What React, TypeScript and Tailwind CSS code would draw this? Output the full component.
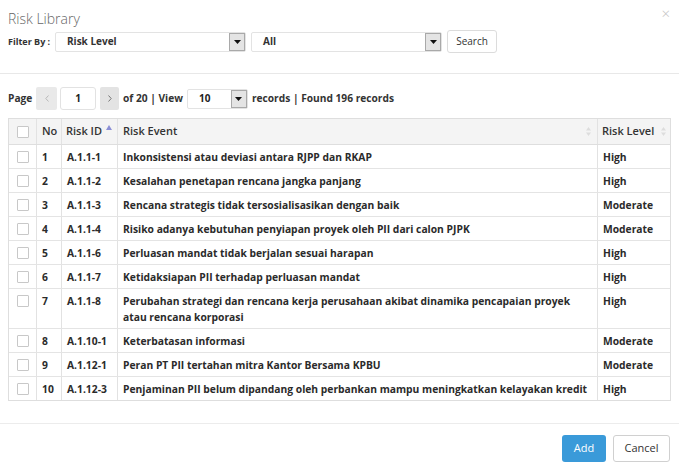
import React from "react";

const rows: [string, string, string, string][] = [
  ["1", "A.1.1-1", "Inkonsistensi atau deviasi antara RJPP dan RKAP", "High"],
  ["2", "A.1.1-2", "Kesalahan penetapan rencana jangka panjang", "High"],
  ["3", "A.1.1-3", "Rencana strategis tidak tersosialisasikan dengan baik", "Moderate"],
  ["4", "A.1.1-4", "Risiko adanya kebutuhan penyiapan proyek oleh PII dari calon PJPK", "Moderate"],
  ["5", "A.1.1-6", "Perluasan mandat tidak berjalan sesuai harapan", "High"],
  ["6", "A.1.1-7", "Ketidaksiapan PII terhadap perluasan mandat", "High"],
  ["7", "A.1.1-8", "Perubahan strategi dan rencana kerja perusahaan akibat dinamika pencapaian proyek\natau rencana korporasi", "High"],
  ["8", "A.1.10-1", "Keterbatasan informasi", "Moderate"],
  ["9", "A.1.12-1", "Peran PT PII tertahan mitra Kantor Bersama KPBU", "Moderate"],
  ["10", "A.1.12-3", "Penjaminan PII belum dipandang oleh perbankan mampu meningkatkan kelayakan kredit", "High"],
];

function Arrow() {
  return (
    <div className="absolute right-0 top-0 bottom-0 w-[16px] border border-[#a9a9a9] bg-[#e4e4e4] flex items-center justify-center">
      <svg width="7" height="4" viewBox="0 0 7 4">
        <path d="M0 0 L7 0 L3.5 4 Z" fill="#111" />
      </svg>
    </div>
  );
}

function Select({ w, label }: { w: string; label: string }) {
  return (
    <div className={`relative h-[20px] ${w} border border-[#e3e3e3] rounded-[2px] bg-white flex items-center pl-[11px] text-[10px] font-bold text-[#333]`}>
      {label}
      <Arrow />
    </div>
  );
}

function Check() {
  return <div className="w-[12px] h-[12px] border border-[#c8c8c8] rounded-[1px] bg-white mx-auto" />;
}

function SortBoth() {
  return (
    <svg width="5" height="9" viewBox="0 0 5 9" className="shrink-0">
      <path d="M0 3.5 L2.5 0 L5 3.5 Z" fill="#ddd" />
      <path d="M0 5.5 L2.5 9 L5 5.5 Z" fill="#ddd" />
    </svg>
  );
}

export default function App() {
  return (
    <div
      className="w-[679px] h-[473px] bg-white relative text-[#333] flex flex-col"
      style={{ fontFamily: '"Open Sans", "Noto Sans", sans-serif' }}
    >
      <div className="px-[8px] pt-[9px] pb-[20px] border-b border-[#e8e8e8] relative">
        <div className="absolute right-[9px] top-[4px] text-[15px] font-light text-[#c4c4c4] leading-[18px]">×</div>
        <div className="text-[14px] font-light text-[#666] leading-[20px]">Risk Library</div>
        <div className="flex items-center mt-[1px] h-[23px]">
          <div className="text-[9px] font-bold text-[#333] w-[47px]">Filter By :</div>
          <Select w="w-[191px]" label="Risk Level" />
          <div className="w-[5px]" />
          <Select w="w-[191px]" label="All" />
          <div className="w-[5px]" />
          <div className="h-[23px] w-[50px] border border-[#dcdcdc] rounded-[3px] flex items-center justify-center text-[10px] text-[#333]">
            Search
          </div>
        </div>
      </div>

      <div className="px-[8px] pt-[13px] pb-[22px] border-b border-[#ececec]">
        <div className="flex items-center h-[23px] text-[10.2px] font-bold text-[#333]">
          <span className="w-[28px]">Page</span>
          <div className="w-[21px] h-[23px] bg-[#e9e9e9] rounded-[2px] flex items-center justify-center">
            <svg width="4" height="7" viewBox="0 0 4 7">
              <path d="M3.5 0.5 L0.8 3.5 L3.5 6.5" fill="none" stroke="#b8b8b8" strokeWidth="1" />
            </svg>
          </div>
          <div className="w-[36px] h-[23px] ml-[3px] border border-[#e2e2e2] rounded-[3px] flex items-center justify-center text-[10px] text-[#222]">
            1
          </div>
          <div className="w-[19px] h-[23px] ml-[4px] bg-[#e3e3e3] rounded-[2px] flex items-center justify-center">
            <svg width="4" height="7" viewBox="0 0 4 7">
              <path d="M0.5 0.5 L3.2 3.5 L0.5 6.5" fill="none" stroke="#777" strokeWidth="1" />
            </svg>
          </div>
          <span className="ml-[4px]">of 20 | View</span>
          <div className="relative ml-[4px] h-[20px] w-[61px] border border-[#e3e3e3] rounded-[2px] flex items-center pl-[11px] text-[10px] font-bold text-[#222]">
            10
            <Arrow />
          </div>
          <span className="ml-[4px]">records | Found 196 records</span>
        </div>

        <div className="mt-[8px] border border-[#dedede]">
          <div className="flex h-[26px] bg-[#f4f4f4] border-b border-[#dedede] text-[11px] font-semibold text-[#333]">
            <div className="w-[28px] border-r border-[#e2e2e2] flex items-center"><Check /></div>
            <div className="w-[25px] border-r border-[#e2e2e2] flex items-center pl-[5px]">No</div>
            <div className="w-[56px] border-r border-[#e2e2e2] flex items-center pl-[4px] gap-[4px]">
              <span>Risk ID</span>
              <svg width="6" height="5" viewBox="0 0 6 5" className="mt-[-8px]">
                <path d="M0 5 L3 0 L6 5 Z" fill="#8b8fd6" />
              </svg>
            </div>
            <div className="w-[480px] border-r border-[#e2e2e2] flex items-center justify-between pl-[5px] pr-[6px]">
              <span>Risk Event</span>
              <SortBoth />
            </div>
            <div className="flex-1 flex items-center justify-between pl-[4px] pr-[4px]">
              <span>Risk Level</span>
              <SortBoth />
            </div>
          </div>
          {rows.map((r, i) => (
            <div
              key={r[0]}
              className={`flex text-[10.3px] font-bold text-[#2b2b2b] leading-[16px] ${i < rows.length - 1 ? "border-b border-[#e4e4e4]" : ""}`}
            >
              <div className="w-[28px] border-r border-[#e2e2e2] pt-[6px] pb-[5px]"><Check /></div>
              <div className="w-[25px] border-r border-[#e2e2e2] pl-[5px] pt-[4px] pb-[3px]">{r[0]}</div>
              <div className="w-[56px] border-r border-[#e2e2e2] pl-[5px] pt-[4px] pb-[3px]">{r[1]}</div>
              <div className="w-[480px] border-r border-[#e2e2e2] pl-[5px] pt-[4px] pb-[3px] whitespace-pre-line">{r[2]}</div>
              <div className="flex-1 pl-[5px] pt-[4px] pb-[3px]">{r[3]}</div>
            </div>
          ))}
        </div>
      </div>

      <div className="flex justify-end gap-[7px] pt-[11px] pr-[9px]">
        <div className="w-[44px] h-[27px] rounded-[3px] bg-[#3a9ad9] text-white text-[11px] flex items-center justify-center">
          Add
        </div>
        <div className="w-[57px] h-[27px] rounded-[3px] border border-[#d0d0d0] bg-white text-[#333] text-[11px] flex items-center justify-center">
          Cancel
        </div>
      </div>
    </div>
  );
}
